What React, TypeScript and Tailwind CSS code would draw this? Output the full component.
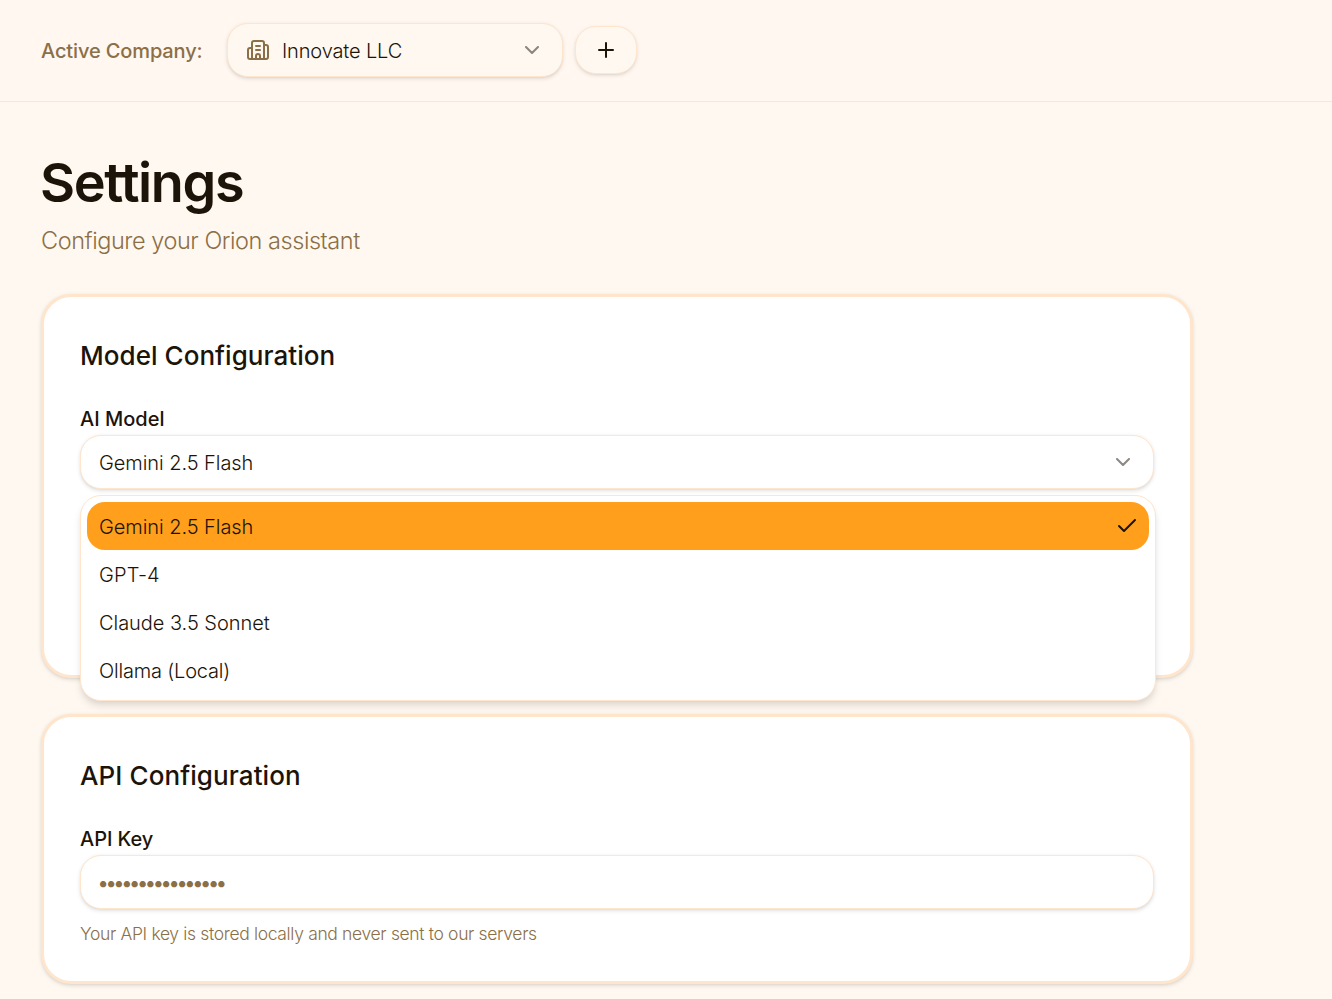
import React from "react";
import { Building2, Check, ChevronDown, Plus } from "lucide-react";

const models = [
  { name: "Gemini 2.5 Flash", tracking: "tracking-[-0.06px]" },
  { name: "GPT-4", tracking: "tracking-[0.1px]" },
  { name: "Claude 3.5 Sonnet", tracking: "tracking-[-0.04px]" },
  { name: "Ollama (Local)", tracking: "tracking-[-0.18px]" },
];

const fieldShadow = "shadow-[0_1.5px_4.5px_rgba(0,0,0,0.1),0_1.5px_3px_-1.5px_rgba(0,0,0,0.1)]";

function Header() {
  return (
    <header className="flex h-[102px] items-start border-b border-[#ffe5cf] bg-[#fff7f0] pl-[41px] pt-[23px]">
      <span className="mt-[13px] w-[186px] whitespace-nowrap text-[20px] font-[450] leading-[30px] tracking-[-0.12px] text-[#8b6f47]">
        Active Company:
      </span>
      <button className={`flex h-[54px] w-[336px] items-center rounded-[21px] border border-[#ffe5cc] bg-[#fff8f0] px-[18px] ${fieldShadow}`}>
        <Building2 className="size-6 text-[#8b6f47]" strokeWidth={2} />
        <span className="ml-3 whitespace-nowrap pt-0.5 text-[20px] font-[350] leading-[30px] tracking-[-0.14px]">
          Innovate LLC
        </span>
        <ChevronDown className="ml-auto size-6 opacity-50" strokeWidth={2} />
      </button>
      <button className={`ml-3 mt-[3px] flex h-12 w-[62px] items-center justify-center rounded-[21px] border border-[#ffe5cc] bg-[#fff8f0] ${fieldShadow}`}>
        <Plus className="size-6" strokeWidth={2} />
      </button>
    </header>
  );
}

function ModelMenu() {
  return (
    <ul className="absolute left-0 top-[60px] z-10 h-[206px] w-[1076px] rounded-[21px] border border-[#ffe5cc] bg-white p-1.5 shadow-[0_6px_9px_-1.5px_rgba(0,0,0,0.1),0_3px_6px_-3px_rgba(0,0,0,0.1)]">
      {models.map((model, i) => (
        <li
          key={model.name}
          className={`flex h-12 items-center rounded-[18px] pl-3 pr-[10px] text-[20px] font-[350] leading-[30px] ${i === 0 ? "bg-[#ff9f1c]" : ""}`}
        >
          <span className={`pt-0.5 ${model.tracking}`}>{model.name}</span>
          {i === 0 && <Check className="ml-auto size-6" strokeWidth={2} />}
        </li>
      ))}
    </ul>
  );
}

const card =
  "w-[1152px] rounded-[30px] border-[3px] border-[#ffe5cc] bg-white px-9 pt-9 shadow-[0_1.5px_4.5px_rgba(0,0,0,0.1),0_1.5px_3px_-1.5px_rgba(0,0,0,0.1)]";

export default function App() {
  return (
    <div className="h-[999px] w-full overflow-hidden bg-[#fff8f0] font-['Inter',sans-serif] text-[#1c1408]">
      <Header />
      <main className="flex flex-col items-start pl-[41px] pt-[48px]">
        <h1 className="-ml-px h-[66px] whitespace-nowrap text-[54px] font-semibold leading-[66px] tracking-[-1.35px]">
          Settings
        </h1>
        <p className="mt-[7px] h-9 whitespace-nowrap text-[23.5px] font-light leading-9 tracking-[-0.45px] text-[#8b6f47]">
          Configure your Orion assistant
        </p>
        <section className={`mt-[35px] h-[384px] ${card}`}>
          <h2 className="mt-[3px] h-[40px] text-[26px] font-medium leading-[40px] tracking-[0.05px]">
            Model Configuration
          </h2>
          <div className="mt-[28px] h-[30px] text-[20px] font-[450] leading-[30px]">
            AI Model
          </div>
          <div className="relative mt-[1px]">
            <button className={`flex h-[54px] w-full items-center rounded-[21px] border border-[#ffe5cc] bg-white px-[18px] ${fieldShadow}`}>
              <span className="pt-0.5 text-[20px] font-[350] leading-[30px] tracking-[-0.06px]">Gemini 2.5 Flash</span>
              <ChevronDown className="ml-auto size-6 opacity-50" strokeWidth={2} />
            </button>
            <ModelMenu />
          </div>
        </section>
        <section className={`mt-9 h-[270px] ${card}`}>
          <h2 className="mt-[3px] h-[40px] text-[26px] font-medium leading-[40px] tracking-[0.09px]">
            API Configuration
          </h2>
          <div className="mt-[28px] h-[30px] text-[20px] font-[450] leading-[30px] tracking-[-0.05px]">
            API Key
          </div>
          <div className={`mt-[1px] flex h-[54px] w-full items-center rounded-[21px] border border-[#ffe5cc] bg-white px-[18px] ${fieldShadow}`}>
            <span className="-ml-[1.5px] pt-0.5 text-[20px] leading-[30px] tracking-[-3.36px] text-[#8b6f47]">••••••••••••••••</span>
          </div>
          <p className="mt-[13px] h-6 whitespace-nowrap text-[17.5px] font-light leading-6 tracking-[-0.345px] text-[#8b6f47]">
            Your API key is stored locally and never sent to our servers
          </p>
        </section>
      </main>
    </div>
  );
}
